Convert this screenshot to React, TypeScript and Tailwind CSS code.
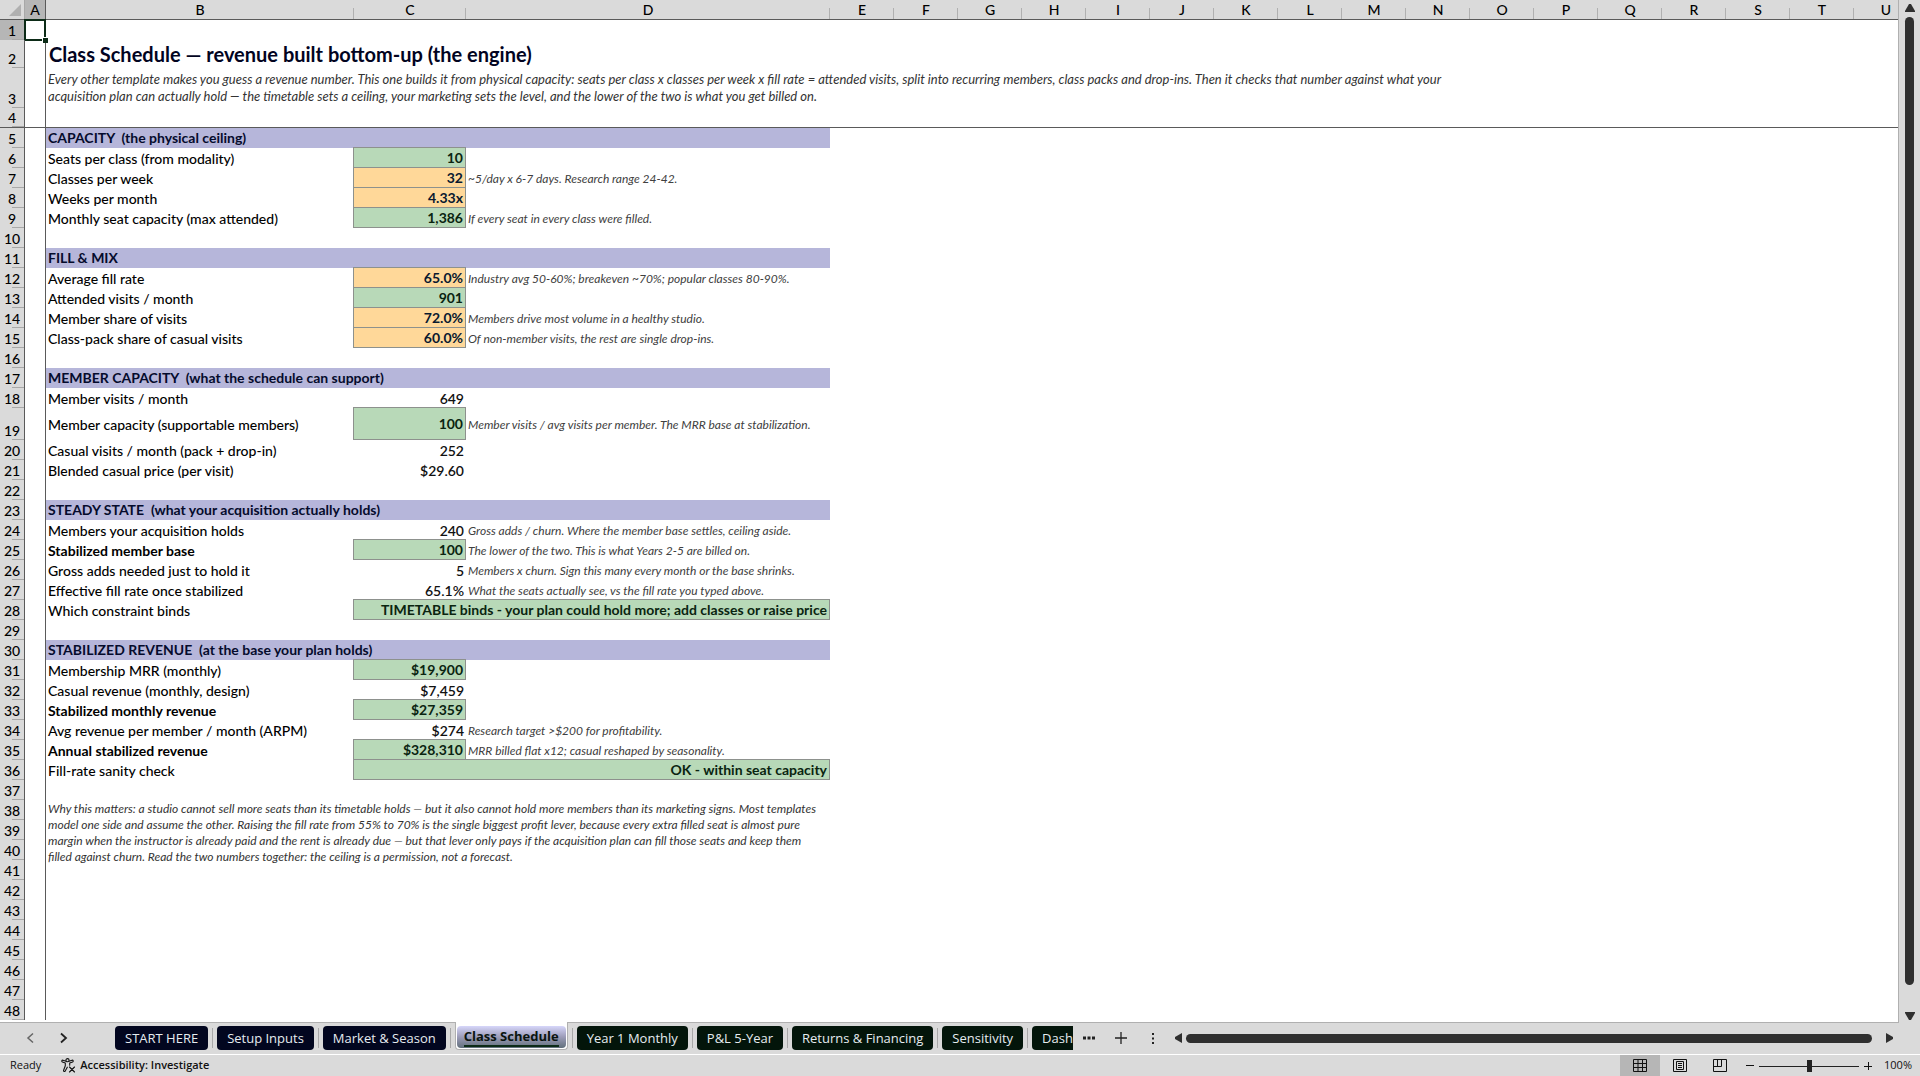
import type { ReactNode } from 'react'

type Kind = 'plain' | 'green' | 'orange'

interface Row {
    n: number;
    head?: string;
    label?: string;
    strong?: boolean;
    value?: string;
    kind?: Kind;
    note?: string;
    wide?: boolean;
    tall?: boolean;
}

const rows: Row[] = [
    { n: 5, head: 'CAPACITY  (the physical ceiling)' },
    { n: 6, label: 'Seats per class (from modality)', value: '10', kind: 'green' },
    { n: 7, label: 'Classes per week', value: '32', kind: 'orange', note: '~5/day x 6-7 days. Research range 24-42.' },
    { n: 8, label: 'Weeks per month', value: '4.33x', kind: 'orange' },
    { n: 9, label: 'Monthly seat capacity (max attended)', value: '1,386', kind: 'green', note: 'If every seat in every class were filled.' },
    { n: 10 },
    { n: 11, head: 'FILL & MIX' },
    { n: 12, label: 'Average fill rate', value: '65.0%', kind: 'orange', note: 'Industry avg 50-60%; breakeven ~70%; popular classes 80-90%.' },
    { n: 13, label: 'Attended visits / month', value: '901', kind: 'green' },
    { n: 14, label: 'Member share of visits', value: '72.0%', kind: 'orange', note: 'Members drive most volume in a healthy studio.' },
    { n: 15, label: 'Class-pack share of casual visits', value: '60.0%', kind: 'orange', note: 'Of non-member visits, the rest are single drop-ins.' },
    { n: 16 },
    { n: 17, head: 'MEMBER CAPACITY  (what the schedule can support)' },
    { n: 18, label: 'Member visits / month', value: '649' },
    { n: 19, label: 'Member capacity (supportable members)', value: '100', kind: 'green', note: 'Member visits / avg visits per member. The MRR base at stabilization.', tall: true },
    { n: 20, label: 'Casual visits / month (pack + drop-in)', value: '252' },
    { n: 21, label: 'Blended casual price (per visit)', value: '$29.60' },
    { n: 22 },
    { n: 23, head: 'STEADY STATE  (what your acquisition actually holds)' },
    { n: 24, label: 'Members your acquisition holds', value: '240', note: 'Gross adds / churn. Where the member base settles, ceiling aside.' },
    { n: 25, label: 'Stabilized member base', strong: true, value: '100', kind: 'green', note: 'The lower of the two. This is what Years 2-5 are billed on.' },
    { n: 26, label: 'Gross adds needed just to hold it', value: '5', note: 'Members x churn. Sign this many every month or the base shrinks.' },
    { n: 27, label: 'Effective fill rate once stabilized', value: '65.1%', note: 'What the seats actually see, vs the fill rate you typed above.' },
    { n: 28, label: 'Which constraint binds', value: 'TIMETABLE binds - your plan could hold more; add classes or raise price', kind: 'green', wide: true },
    { n: 29 },
    { n: 30, head: 'STABILIZED REVENUE  (at the base your plan holds)' },
    { n: 31, label: 'Membership MRR (monthly)', value: '$19,900', kind: 'green' },
    { n: 32, label: 'Casual revenue (monthly, design)', value: '$7,459' },
    { n: 33, label: 'Stabilized monthly revenue', strong: true, value: '$27,359', kind: 'green' },
    { n: 34, label: 'Avg revenue per member / month (ARPM)', value: '$274', note: 'Research target >$200 for profitability.' },
    { n: 35, label: 'Annual stabilized revenue', strong: true, value: '$328,310', kind: 'green', note: 'MRR billed flat x12; casual reshaped by seasonality.' },
    { n: 36, label: 'Fill-rate sanity check', value: 'OK - within seat capacity', kind: 'green', wide: true },
    { n: 37 },
]

const emptyRows = [39, 40, 41, 42, 43, 44, 45, 46, 47, 48]
const columns = ['E', 'F', 'G', 'H', 'I', 'J', 'K', 'L', 'M', 'N', 'O', 'P', 'Q', 'R', 'S', 'T', 'U']

const box = 'border-r border-b border-[#8d918d] font-bold shadow-[-1px_0_0_#8d918d,0_-1px_0_#8d918d,-1px_-1px_0_#8d918d]'
const kinds: Record<Kind, string> = {
    plain: 'font-semibold text-[#111111]',
    green: `${box} bg-[#b8d9b8] text-[#0a2410]`,
    orange: `${box} bg-[#ffd899] text-[#0a1a30]`,
}

function RowHead({ n, className = 'bg-[#dadada]' }: { n: number; className?: string }) {
    return (
        <th scope="row" className={`relative border-r border-[#5a5a5a] p-0 text-center align-bottom font-medium ${className}`}>
            <span className="block leading-[19px]">{n}</span>
            <span className="absolute right-0 bottom-0 h-px w-3 bg-[#a8a8a8]" />
        </th>
    )
}

function Line({ n, height = 'h-5', children }: { n: number; height?: string; children?: ReactNode }) {
    return (
        <tr className={height}>
            <RowHead n={n} />
            <td className="border-r border-[#5a5a5a] p-0" />
            {children}
        </tr>
    )
}

function SheetRow({ row }: { row: Row }) {
    if (row.head) {
        return (
            <Line n={row.n}>
                <td colSpan={3} className="bg-[#b6b6da] px-0.5 py-0 font-bold whitespace-pre text-[#050b2c]">{row.head}</td>
            </Line>
        )
    }
    if (!row.label) {
        return <Line n={row.n} />
    }
    return (
        <Line n={row.n} height={row.tall ? 'h-8' : 'h-5'}>
            <td className={`px-0.5 pt-px pb-0 ${row.strong ? 'font-bold' : 'font-medium'}`}>{row.label}</td>
            <td colSpan={row.wide ? 2 : 1} className={`px-0.5 pt-px pb-0 text-right ${kinds[row.kind ?? 'plain']}`}>{row.value}</td>
            {!row.wide && <td className="px-0.5 pt-px pb-0 text-xs text-[#404040] italic">{row.note}</td>}
        </Line>
    )
}

function Sheet() {
    return (
        <table className="w-[1918px] table-fixed border-separate border-spacing-0 text-sm leading-[18px] whitespace-nowrap text-black">
            <colgroup>
                <col className="w-[25px]" />
                <col className="w-[21px]" />
                <col className="w-[308px]" />
                <col className="w-[112px]" />
                <col className="w-[364px]" />
                {columns.map((c) => <col key={c} className="w-16" />)}
            </colgroup>
            <thead>
                <tr className="h-5 bg-[#dadada]">
                    <td className="border-r border-b border-[#5a5a5a] border-r-[#a8a8a8] p-0">
                        <svg className="mr-[3px] ml-auto h-3 w-3" viewBox="0 0 12 12"><path d="M12 0V12H0z" fill="#b0b0b0" /></svg>
                    </td>
                    <th scope="col" className="border-r border-b border-[#5a5a5a] bg-[#b6b6b6] p-0 font-medium">A</th>
                    {['B', 'C', 'D', ...columns].map((c) => (
                        <th scope="col" key={c} className="relative border-b border-[#5a5a5a] p-0 font-medium">
                            {c}
                            <span className="absolute right-0 bottom-0 h-[11px] w-px bg-[#b0b0b0]" />
                        </th>
                    ))}
                </tr>
            </thead>
            <tbody>
                <tr className="h-5">
                    <RowHead n={1} className="bg-[#b6b6b6]" />
                    <td className="relative border-r border-[#5a5a5a] p-0">
                        <span className="absolute -top-px -right-px -bottom-px -left-px border-2 border-[#0c2b17]" />
                        <span className="absolute -right-[3px] -bottom-[3px] h-[6px] w-[6px] border-t border-l border-white bg-[#0c2b17]" />
                    </td>
                </tr>
                <Line n={2} height="h-7">
                    <td colSpan={3} className="px-[3px] py-0 text-xl leading-6 font-bold text-[#02041f]">Class Schedule — revenue built bottom-up (the engine)</td>
                </Line>
                <Line n={3} height="h-10">
                    <td colSpan={13} className="px-0.5 py-0 text-[13px] leading-[17px] text-[#333333] italic">
                        Every other template makes you guess a revenue number. This one builds it from physical capacity: seats per class x classes per week x fill rate = attended visits, split into recurring members, class packs and drop-ins. Then it checks that number against what your<br />
                        acquisition plan can actually hold — the timetable sets a ceiling, your marketing sets the level, and the lower of the two is what you get billed on.
                    </td>
                </Line>
                {/* frozen panes end below row 4 */}
                <tr className="h-5">
                    <RowHead n={4} className="border-b bg-[#dadada]" />
                    <td className="border-r border-b border-[#5a5a5a] p-0" />
                    <td colSpan={20} className="border-b border-[#5a5a5a] p-0" />
                </tr>
                {rows.map((row) => <SheetRow key={row.n} row={row} />)}
                <Line n={38}>
                    <td colSpan={3} rowSpan={4} className="px-0.5 py-px align-top text-xs leading-4 text-[#333333] italic">
                        Why this matters: a studio cannot sell more seats than its timetable holds — but it also cannot hold more members than its marketing signs. Most templates<br />
                        model one side and assume the other. Raising the fill rate from 55% to 70% is the single biggest profit lever, because every extra filled seat is almost pure<br />
                        margin when the instructor is already paid and the rent is already due — but that lever only pays if the acquisition plan can fill those seats and keep them<br />
                        filled against churn. Read the two numbers together: the ceiling is a permission, not a forecast.
                    </td>
                </Line>
                {emptyRows.map((n) => <Line key={n} n={n} />)}
            </tbody>
        </table>
    )
}

function Separator() {
    return <span className="mx-1 h-5 w-px shrink-0 bg-[#a8a8a8]" />
}

function Tab({ name, color }: { name: string; color: string }) {
    return (
        <>
            <button className={`h-6 shrink-0 rounded px-2.5 leading-6 whitespace-nowrap text-[#e6ecf0] ${color}`}>{name}</button>
            <Separator />
        </>
    )
}

function TabBar() {
    return (
        <div className="relative -mt-px flex h-[33px] shrink-0 items-center border-b border-white font-['Open_Sans','Noto_Sans',sans-serif] text-[13px]">
            <button aria-label="Previous sheet" className="ml-6 w-4 shrink-0">
                <svg className="h-3 w-3" viewBox="0 0 12 12" fill="none" stroke="#666" strokeWidth="1.5"><path d="M9 1.500L4 6l5 4.500" /></svg>
            </button>
            <button aria-label="Next sheet" className="mr-[45px] ml-[14px] w-4 shrink-0">
                <svg className="ml-auto h-3 w-3" viewBox="0 0 12 12" fill="none" stroke="#222" strokeWidth="1.8"><path d="M3 1.500L8 6l-5 4.500" /></svg>
            </button>
            <Tab name="START HERE" color="bg-[#02061f]" />
            <Tab name="Setup Inputs" color="bg-[#02061f]" />
            <Tab name="Market & Season" color="bg-[#02061f]" />
            {/* the open sheet's tab joins the grid above it */}
            <div className="h-7 shrink-0 self-start rounded-b border-x border-b border-[#b0b0b0] bg-white px-px pt-1">
                <button className="h-[22px] rounded bg-linear-to-b from-[#d6d6fa] via-[#9c9cb8] to-[#62707c] px-[7px] font-bold whitespace-nowrap text-[#0a140f]">
                    <span className="block border-b-2 border-[#0c2b17] leading-[18px]">Class Schedule</span>
                </button>
            </div>
            <Separator />
            <Tab name="Year 1 Monthly" color="bg-[#03150a]" />
            <Tab name="P&L 5-Year" color="bg-[#03150a]" />
            <Tab name="Returns & Financing" color="bg-[#03150a]" />
            <Tab name="Sensitivity" color="bg-[#03150a]" />
            <button className="h-6 shrink-0 rounded-l bg-[#03150a] pl-2.5 leading-6 text-[#e6ecf0]">Dash</button>
            <button aria-label="More sheets" className="ml-2 w-4 shrink-0">
                <svg className="h-4 w-4" viewBox="0 0 16 16" fill="#222"><path d="M2 6.500h3v3H2zM6.500 6.500h3v3h-3zM11 6.500h3v3h-3z" /></svg>
            </button>
            <button aria-label="New sheet" className="ml-4 w-4 shrink-0">
                <svg className="h-4 w-4" viewBox="0 0 16 16" stroke="#222" strokeWidth="1.3"><path d="M2 8h12M8 2v12" /></svg>
            </button>
            <svg className="ml-4 h-4 w-4 shrink-0" viewBox="0 0 16 16" fill="#222"><path d="M7 3h2v2H7zM7 7.500h2v2H7zM7 12h2v2H7z" /></svg>
            <svg className="mr-1 ml-[13px] h-3 w-2 shrink-0" viewBox="0 0 8 12" fill="#2f2f2f"><path d="M8 1v10L1 7V5z" /></svg>
            <div className="h-[9px] grow rounded-full bg-[#2f2f2f]" />
            <svg className="mr-[26px] ml-[14px] h-3 w-2 shrink-0" viewBox="0 0 8 12" fill="#2f2f2f"><path d="M0 1v10l7-4V5z" /></svg>
        </div>
    )
}

function StatusBar() {
    return (
        <div className="flex h-[21px] shrink-0 items-center font-['Open_Sans','Noto_Sans',sans-serif] text-[11px] text-[#111111]">
            <span className="ml-[10px]">Ready</span>
            <button className="ml-5 flex items-center gap-1 font-semibold">
                <svg className="h-[15px] w-[15px]" viewBox="0 0 15 15" fill="none" stroke="#111" strokeWidth="1.1" strokeLinecap="round" strokeLinejoin="round">
                    <circle cx="6.500" cy="2.200" r="1.600" />
                    <path d="M5 3.200L2 2.200C.800 2 .400 3.400 1.400 3.900L4.300 5.100V7.800L2.600 12.300C2.300 13.500 3.700 14 4.200 13L6.300 9.200M8 3.200L11 2.200C12.200 2 12.600 3.400 11.600 3.900L8.700 5.100V7.300" />
                    <path d="M8.500 9L13.500 14M13.500 9L8.500 14" />
                </svg>
                Accessibility: Investigate
            </button>
            <button aria-label="Normal view" className="ml-auto flex h-full w-10 items-center justify-center bg-[#b6b6b6]">
                <svg className="h-[13px] w-[14px]" viewBox="0 0 14 13" fill="none" stroke="#111"><path d="M.5.5h13v12H.500zM5 .500v12M9.500.500v12M.500 4.500h13M.500 8.500h13" /></svg>
            </button>
            <button aria-label="Page layout" className="flex h-full w-10 items-center justify-center">
                <svg className="h-[13px] w-[14px]" viewBox="0 0 14 13" fill="none" stroke="#111"><path d="M.5.5h13v12H.500zM3.500 2.500h7v8h-7zM5 4.500h4M5 6.500h4M5 8.500h4" /></svg>
            </button>
            <button aria-label="Page break preview" className="flex h-full w-10 items-center justify-center">
                <svg className="h-[13px] w-[14px]" viewBox="0 0 14 13" fill="none" stroke="#111"><path d="M.5.5h13v12H.500zM.500 7.500h8v-7M4.500.500v7" /></svg>
            </button>
            <button aria-label="Zoom out" className="ml-1.5 h-px w-2 bg-[#111111]" />
            <svg className="mx-[5px] h-3 w-[100px]" viewBox="0 0 100 12"><path d="M0 6.500h100" stroke="#222" /><path d="M48 0h5v12h-5z" fill="#222" /></svg>
            <button aria-label="Zoom in" className="w-2">
                <svg className="h-2 w-2" viewBox="0 0 8 8" stroke="#111"><path d="M0 4.500h8M4.500 0v8" /></svg>
            </button>
            <span className="mr-2 ml-3">100%</span>
        </div>
    )
}

export default function App() {
    return (
        <div className="flex h-screen flex-col overflow-hidden bg-[#dadada] font-['Lato','Liberation_Sans',sans-serif]">
            <div className="flex min-h-0 grow">
                <main className="min-w-0 grow overflow-hidden border-r border-b border-[#b0b0b0] bg-white">
                    <Sheet />
                </main>
                <div className="flex w-[21px] shrink-0 flex-col items-center pt-1 pb-[3px]">
                    <svg className="h-2 w-[10px]" viewBox="0 0 10 8" fill="#2f2f2f"><path d="M4 0h2l4 7v1H0V7z" /></svg>
                    <div className="mt-[5px] mb-[27px] w-[9px] grow rounded-full bg-[#2f2f2f]" />
                    <svg className="h-2 w-[10px]" viewBox="0 0 10 8" fill="#2f2f2f"><path d="M4 8h2l4-7V0H0v1z" /></svg>
                </div>
            </div>
            <TabBar />
            <StatusBar />
        </div>
    )
}
